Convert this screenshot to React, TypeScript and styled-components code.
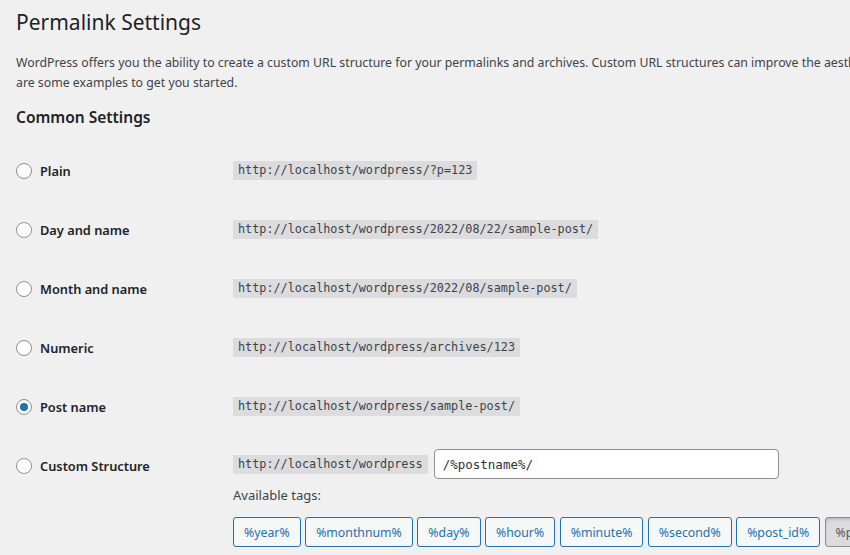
import React from 'react';
import styled, { createGlobalStyle } from 'styled-components';

const GlobalStyle = createGlobalStyle`
  html, body {
    margin: 0;
    padding: 0;
    background: #f0f0f1;
    overflow: hidden;
  }
  body {
    font-family: "Noto Sans", "Open Sans", sans-serif;
    color: #3c434a;
    font-size: 13px;
  }
`;

const Wrap = styled.div`
  padding: 0 0 0 16px;
  width: 1200px;
`;

const Title = styled.h1`
  margin: 0;
  padding: 7px 0 4px;
  font-size: 21px;
  font-weight: 400;
  line-height: 30px;
  color: #1d2327;
`;

const Intro = styled.p`
  margin: 12px 0 0;
  font-size: 12.3px;
  line-height: 19.5px;
  white-space: nowrap;
  color: #3c434a;
`;

const SectionTitle = styled.h2`
  margin: 14px 0 0;
  font-size: 15.5px;
  font-weight: 600;
  line-height: 22px;
  color: #1d2327;
`;

const Table = styled.div`
  display: grid;
  grid-template-columns: 217px 1fr;
  margin-top: 13px;
`;

const Label = styled.label`
  display: flex;
  align-items: center;
  gap: 8px;
  padding: 20px 0;
  height: 19px;
  font-size: 12.8px;
  font-weight: 600;
  color: #1d2327;
`;

const Radio = styled.span<{ $checked?: boolean }>`
  position: relative;
  width: 16px;
  height: 16px;
  box-sizing: border-box;
  border: 1px solid #8c8f94;
  border-radius: 50%;
  background: #fff;
  flex-shrink: 0;

  &::after {
    content: '';
    display: ${p => (p.$checked ? 'block' : 'none')};
    position: absolute;
    left: 3px;
    top: 3px;
    width: 8px;
    height: 8px;
    border-radius: 50%;
    background: #2271b1;
  }
`;

const Cell = styled.div`
  display: flex;
  flex-direction: column;
  align-items: flex-start;
  padding: 20px 0;
  min-height: 19px;
  justify-content: center;
`;

const Code = styled.code`
  display: inline-block;
  background: #dcdcde;
  padding: 0 5px;
  height: 19px;
  line-height: 19px;
  font-family: "DejaVu Sans Mono", "Liberation Mono", monospace;
  font-size: 11.8px;
  color: #3c434a;
`;

const InputRow = styled.div`
  display: flex;
  align-items: center;
  gap: 6px;
  margin-top: -7px;
`;

const StructureInput = styled.div`
  box-sizing: border-box;
  width: 345px;
  height: 30px;
  padding: 0 8px;
  display: flex;
  align-items: center;
  background: #fff;
  border: 1px solid #8c8f94;
  border-radius: 4px;
  font-family: "DejaVu Sans Mono", "Liberation Mono", monospace;
  font-size: 12.5px;
  color: #2c3338;
`;

const TagsLabel = styled.div`
  margin-top: 6px;
  font-size: 13px;
  line-height: 20px;
  color: #3c434a;
`;

const Tags = styled.div`
  display: flex;
  gap: 4.5px;
  margin-top: 12px;
  white-space: nowrap;
`;

const TagButton = styled.button<{ $pressed?: boolean }>`
  box-sizing: border-box;
  height: 30px;
  padding: 0 10px;
  border: 1px solid ${p => (p.$pressed ? '#8c8f94' : '#2271b1')};
  border-radius: 3px;
  background: ${p => (p.$pressed ? '#dcdcde' : '#f6f7f7')};
  box-shadow: ${p => (p.$pressed ? 'inset 0 2px 5px -3px rgba(0,0,0,0.5)' : 'none')};
  color: ${p => (p.$pressed ? '#50575e' : '#2271b1')};
  font-family: "Noto Sans", "Open Sans", sans-serif;
  font-size: 12.3px;
  cursor: pointer;
`;

const options = [
  { label: 'Plain', url: 'http://localhost/wordpress/?p=123' },
  { label: 'Day and name', url: 'http://localhost/wordpress/2022/08/22/sample-post/' },
  { label: 'Month and name', url: 'http://localhost/wordpress/2022/08/sample-post/' },
  { label: 'Numeric', url: 'http://localhost/wordpress/archives/123' },
  { label: 'Post name', url: 'http://localhost/wordpress/sample-post/', checked: true },
];

const tags = ['%year%', '%monthnum%', '%day%', '%hour%', '%minute%', '%second%', '%post_id%', '%postname%'];

export default function App() {
  return (
    <>
      <GlobalStyle />
      <Wrap>
        <Title>Permalink Settings</Title>
        <Intro>
          WordPress offers you the ability to create a custom URL structure for your permalinks and archives. Custom URL structures can improve the aesthetics, usability, and forward-compatibility of your links. A number of tags are available, and here
          <br />
          are some examples to get you started.
        </Intro>
        <SectionTitle>Common Settings</SectionTitle>
        <Table>
          {options.map(o => (
            <React.Fragment key={o.label}>
              <Label>
                <Radio $checked={o.checked} />
                {o.label}
              </Label>
              <Cell>
                <Code>{o.url}</Code>
              </Cell>
            </React.Fragment>
          ))}
          <Label>
            <Radio />
            Custom Structure
          </Label>
          <Cell>
            <InputRow>
              <Code>http://localhost/wordpress</Code>
              <StructureInput>/%postname%/</StructureInput>
            </InputRow>
            <TagsLabel>Available tags:</TagsLabel>
            <Tags>
              {tags.map((t, i) => (
                <TagButton key={t} $pressed={i === tags.length - 1}>
                  {t}
                </TagButton>
              ))}
            </Tags>
          </Cell>
        </Table>
      </Wrap>
    </>
  );
}
